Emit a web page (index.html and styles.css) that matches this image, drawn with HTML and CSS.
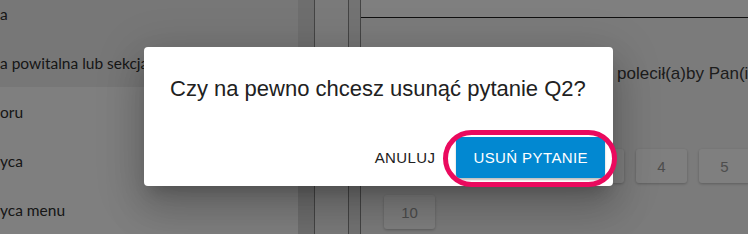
FILE: index.html
```html
<!DOCTYPE html>
<html lang="pl">
<head>
<meta charset="utf-8">
<title>Usuń pytanie</title>
<link rel="stylesheet" href="styles.css">
</head>
<body>
<div class="app">
  <aside class="sidebar">
    <ul class="nav">
      <li class="nav-item nav-item--active">a</li>
      <li class="nav-item nav-item--active">a powitalna lub sekcja</li>
      <li class="nav-item">oru</li>
      <li class="nav-item">yca</li>
      <li class="nav-item">yca menu</li>
    </ul>
  </aside>
  <div class="rail rail-a"></div>
  <div class="rail rail-b"></div>
  <div class="rail rail-c"></div>
  <main class="content">
    <div class="content-head"></div>
    <div class="content-body">
      <p class="question">polecił(a)by Pan(i) naszą firmę znajomemu?</p>
      <div class="scale">
        <div class="scale-btn">0</div>
        <div class="scale-btn">1</div>
        <div class="scale-btn">2</div>
        <div class="scale-btn">3</div>
        <div class="scale-btn">4</div>
        <div class="scale-btn">5</div>
        <div class="scale-btn">6</div>
        <div class="scale-btn">7</div>
        <div class="scale-btn">8</div>
        <div class="scale-btn">9</div>
        <div class="scale-btn">10</div>
      </div>
    </div>
  </main>
</div>
<div class="backdrop"></div>
<div class="dialog" role="dialog">
  <div class="dialog-title">Czy na pewno chcesz usunąć pytanie Q2?</div>
  <div class="dialog-actions">
    <button class="btn btn-text">Anuluj</button>
    <button class="btn btn-primary">Usuń pytanie</button>
  </div>
</div>
<div class="highlight"></div>
</body>
</html>
```
FILE: styles.css
```css
* { box-sizing: border-box; }
html, body { margin: 0; padding: 0; }
body {
  width: 748px;
  height: 234px;
  overflow: hidden;
  position: relative;
  font-family: "Liberation Sans", Arial, sans-serif;
  background: #ffffff;
}
.app {
  display: flex;
  height: 234px;
  overflow: hidden;
}
.sidebar {
  width: 298px;
  flex: none;
  background: #ffffff;
  overflow: hidden;
}
.nav {
  list-style: none;
  margin: -11px 0 0 0;
  padding: 0;
}
.nav-item {
  height: 49px;
  display: flex;
  align-items: center;
  padding-left: 0;
  font-family: Lato, "Open Sans", sans-serif;
  font-size: 15.5px;
  color: #2e2e2e;
  white-space: nowrap;
  background: #ffffff;
}
.nav-item--active { background: #eeeeee; }
.rail { flex: none; height: 100%; border-right: 1px solid #888888; }
.rail-a { width: 17px; background: #dcdcdc; }
.rail-b { width: 34px; background: #f4f4f4; }
.rail-c { width: 12px; background: #e6e6e6; }
.content {
  flex: 1;
  min-width: 0;
  overflow: hidden;
  background: #f7f7f7;
}
.content-head {
  height: 18px;
  background: #ffffff;
  border-bottom: 1px solid #202020;
}
.content-body {
  padding: 46px 0 0 23px;
}
.question {
  margin: 0;
  padding-left: 233px;
  font-size: 17px;
  line-height: 20px;
  color: #3a3a3a;
  white-space: nowrap;
}
.scale {
  margin-top: 65px;
  display: grid;
  grid-template-columns: repeat(10, 51px);
  gap: 12px;
}
.scale-btn {
  height: 34px;
  background: #ffffff;
  border-radius: 3px;
  box-shadow: 0 1px 3px rgba(0,0,0,0.25);
  display: flex;
  align-items: center;
  justify-content: center;
  font-size: 15px;
  color: #9a9a9a;
}
.backdrop {
  position: absolute;
  inset: 0;
  background: rgba(0,0,0,0.5);
}
.dialog {
  position: absolute;
  left: 144px;
  top: 47px;
  width: 469px;
  height: 139px;
  background: #ffffff;
  border-radius: 4px;
  box-shadow: 0 11px 15px -7px rgba(0,0,0,.2), 0 24px 38px 3px rgba(0,0,0,.14), 0 9px 46px 8px rgba(0,0,0,.12);
  display: flex;
  flex-direction: column;
}
.dialog-title {
  padding: 30px 24px 0 26px;
  font-size: 22px;
  line-height: 24px;
  color: #212121;
  white-space: nowrap;
}
.dialog-actions {
  display: flex;
  justify-content: flex-end;
  padding: 36px 8px 8px;
}
.btn {
  height: 41px;
  border: none;
  border-radius: 4px;
  font-family: "Liberation Sans", Arial, sans-serif;
  font-size: 15px;
  letter-spacing: 0.4px;
  text-transform: uppercase;
  cursor: pointer;
}
.btn-text {
  background: transparent;
  color: #212121;
  padding: 0 12px;
  margin-right: 9px;
}
.btn-primary {
  background: #0288d1;
  color: #ffffff;
  padding: 0 17px;
  box-shadow: 0 2px 2px rgba(0,0,0,0.25);
}
.highlight {
  position: absolute;
  left: 443px;
  top: 130px;
  width: 174px;
  height: 57px;
  border: 5px solid #ea0a5e;
  border-radius: 29px;
  pointer-events: none;
}
```
